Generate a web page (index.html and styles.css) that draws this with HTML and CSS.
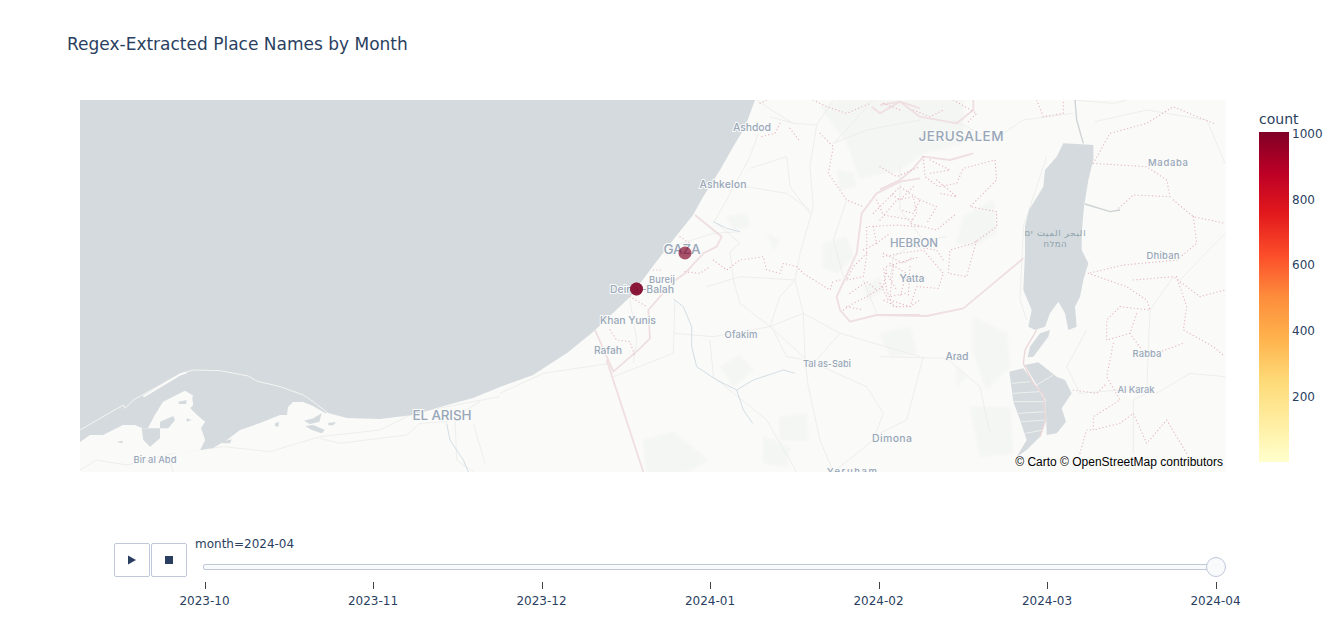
FILE: index.html
```html
<!DOCTYPE html>
<html lang="en">
<head>
<meta charset="utf-8">
<title>Regex-Extracted Place Names by Month</title>
<link rel="stylesheet" href="styles.css">
</head>
<body>
<main class="chart">
  <h1 class="title">Regex-Extracted Place Names by Month</h1>
  <section class="plot-row">
    <div class="map">
      <svg class="map-svg" viewBox="0 0 1146 372" width="1146" height="372" role="img" aria-label="Map of Gaza and surroundings">
        <rect class="land" width="1146" height="372"/>
        <!-- patches -->
        <g class="patches" transform="translate(420,0) scale(.33333)">
          <path d="M430 1020L520 995L625 1080L560 1116H440Z"/>
          <path d="M840 950L920 940L925 1020L840 1020Z"/>
          <path d="M660 800L720 765L760 810L700 860Z"/>
          <path d="M970 430L1040 410L1060 470L1010 520L970 500Z"/>
          <path d="M790 1010L870 1040L860 1100L790 1090Z"/>
          <path d="M1010 210L1060 220L1070 260L1020 270Z"/>
          <path d="M1090 560L1140 530L1150 570L1100 600Z"/>
          <path d="M800 400L840 420L820 450Z"/>
          <path d="M680 350L740 340L750 380L700 390Z"/>
        </g>
        <g class="patches" transform="translate(800,0) scale(.33333)">
          <path d="M-180 20L-120 0H250V130L130 160L60 210L-60 235L-100 130Z"/>
          <path d="M280 650L380 700L390 800L320 870L280 760Z"/>
          <path d="M270 920L390 920L400 1060L300 1070Z"/>
          <path d="M250 350L340 300L350 400L280 440L230 430Z"/>
          <path d="M0 700L90 680L110 760L30 770Z"/>
          <path d="M230 800L260 830L230 860Z"/>
        </g>
        <!-- roads -->
        <g transform="translate(420,0) scale(.33333)" class="roads">
          <polyline points="950,75 930,200 940,320 900,460 885,540 910,640 915,780 925,860 960,1020 1000,1116"/>
          <polyline points="810,50 880,70 950,75 1000,0"/>
          <polyline points="775,100 750,170 680,300 640,370"/>
          <polyline points="750,205 860,170 870,260 930,340"/>
          <polyline points="740,260 860,280 930,330"/>
          <polyline points="650,370 720,430 690,455 700,540 720,610 810,680 900,760 920,780"/>
          <polyline points="810,680 840,590 885,540"/>
          <polyline points="520,700 640,710 810,680 910,640 1020,700"/>
          <polyline points="815,680 860,770 920,780 1100,860 1150,940 1120,1020 1000,1116"/>
          <polyline points="340,830 520,760 525,600"/>
          <polyline points="0,880 130,820 330,790"/>
          <polyline points="630,720 640,830 800,960 890,1116"/>
          <polyline points="1020,700 1260,770"/>
          <polyline points="1020,700 950,780"/>
          <polyline points="885,540 720,530 620,560"/>
          <polyline points="450,460 640,400 720,395"/>
          <polyline points="390,600 410,720 400,790"/>
          <polyline points="1120,0 1020,110 1000,130"/>
          <polyline points="770,0 830,40 880,70"/>
          <polyline points="1000,130 1100,90 1260,60"/>
          <polyline points="1040,300 1000,420 1030,530"/>
          <polyline points="1260,420 1180,470 1170,540"/>
          <polyline points="1090,540 1130,640"/>
        </g>
        <g transform="translate(0,0) scale(.33333)" class="roads">
          <polyline points="0,1110 50,1080 140,1095 280,1060 430,1040 570,1055 720,1010 900,990 1000,940 1100,920 1260,890"/>
          <polyline points="720,1015 780,1030 980,1005 1020,970 1100,965 1200,905"/>
          <polyline points="1180,970 1215,1090"/>
          <polyline points="1125,960 1130,1080 1180,1116"/>
          <polyline points="265,1070 280,1116"/>
        </g>
        <g transform="translate(800,0) scale(.33333)" class="roads">
          <polyline points="0,770 200,775 300,860 330,1000"/>
          <polyline points="645,65 800,30 980,60 1035,190"/>
          <polyline points="500,170 430,380 420,600 440,660"/>
          <polyline points="620,690 560,800 600,880 720,870 830,880 930,820 1035,830"/>
          <polyline points="880,530 810,630 800,880 760,900 760,1060"/>
          <polyline points="900,540 1035,400"/>
          <polyline points="580,0 700,10 740,0"/>
          <polyline points="130,770 80,960 0,1000"/>
          <polyline points="60,200 60,330 130,420 200,410"/>
          <polyline points="220,60 340,120 430,60 580,40"/>
        </g>
        <!-- sea and lagoon -->
        <path class="sea" d="M0 0H675L665 27L653 47L640 70L623 97L613 115L593 140L570 170L550 197L533 213L513 232L487 253L453 275L420 287L393 298L367 305L333 315L300 319L267 318L248 313L245 313L233 306L223 302L213 302L208 307L207 315L200 315L180 323L160 330L147 340L133 348L120 350L125 340L121 328L125 322L117 315L110 308L113 295L112 295L105 291L97 295L83 302L75 315L68 328L62 328L55 325L43 325L33 330L23 335L10 335L0 342Z"/>
        <g transform="scale(.33333)">
          <path class="land" d="M225 945L250 905L290 885L315 872L335 885L340 915L330 925L350 945L375 965L362 985L375 1020L360 1050L300 1060L200 1060L100 1060L120 1000L190 985L205 985Z"/>
          <path class="sea" d="M185 985L240 985L240 1015L210 1040L190 1020Z"/>
          <path class="sea" d="M240 965L280 948L285 960L265 985L240 985Z"/>
          <path class="sea" d="M672 962L700 955L725 940L718 965L690 972Z"/>
          <path class="sea" d="M676 978L700 975L735 990L725 1000L695 990Z"/>
          <path class="sea" d="M745 968L768 967L760 976L745 976Z"/>
          <path class="sea" d="M82 965L95 962L97 985L85 980Z"/>
          <path class="sea" d="M110 1025L130 1022L125 1030Z"/>
          <path class="sea" d="M425 1025L455 1018L450 1030L430 1030Z"/>
          <path class="sea" d="M585 970L597 965L595 980L585 978Z"/>
          <path class="sea" d="M295 905L320 900L318 912L297 912Z"/>
          <path class="sea" d="M320 955L335 960L320 965Z"/>
          <path class="barrier" d="M0 990L130 915L135 925L160 900L300 822L340 810L420 812L505 828L530 843L600 860L670 885L700 905L745 940"/>
          <path class="barrier-thick" d="M190 890L300 824L320 817"/>
        </g>
        <!-- Dead Sea -->
        <g transform="translate(800,0) scale(.33333)">
          <path class="sea" d="M550 130L640 135L640 180L625 240L612 320L605 400L605 450L625 490L610 540L600 590L585 620L590 680L565 690L555 640L535 605L510 640L495 680L465 690L445 680L455 630L430 570L435 460L435 380L447 330L490 260L495 210L530 170Z"/>
          <path class="sea" d="M480 700L510 690L505 710L460 770L443 772L450 740Z"/>
          <path class="sea" d="M388 815L430 805L470 860L497 905L497 960L480 1010L440 1050L410 1070L440 1020L420 960L400 905Z"/>
          <path class="sea" d="M435 795L475 787L530 830L555 840L575 880L545 925L558 965L530 1000L500 1005L497 900L470 855Z"/>
          <g class="pond-lines">
            <polyline points="395,850 450,845"/>
            <polyline points="398,880 480,875"/>
            <polyline points="400,905 495,905"/>
            <polyline points="415,940 497,935"/>
            <polyline points="425,965 497,960"/>
            <polyline points="435,1000 490,990"/>
            <polyline points="470,855 520,825"/>
          </g>
          <polyline class="channel" points="470,690 435,750 430,790 460,850 490,885 497,960 480,1010"/>
          <polyline class="river-grey" points="585,0 590,60 610,130"/>
          <polyline class="river-grey" points="615,312 690,335 720,330"/>
        </g>
        <!-- rivers -->
        <g transform="translate(420,0) scale(.33333)" class="rivers">
          <polyline points="520,597 550,620 575,680 575,740 590,800 650,840 710,870 730,930 758,970"/>
          <polyline points="710,870 760,840 850,810 885,820"/>
          <polyline points="640,365 680,385 720,395"/>
        </g>
        <g transform="scale(.33333)" class="rivers">
          <polyline points="1100,970 1110,1020 1150,1080 1165,1116"/>
        </g>
        <!-- solid borders -->
        <g transform="translate(420,0) scale(.33333)" class="borders">
          <polyline points="585,345 665,410 650,440 610,460 555,520 520,545 445,630 450,715 420,745 340,815 285,690"/>
          <polyline points="320,780 430,1116"/>
          <polyline points="1260,645 1130,645 1050,665 1020,630 1010,590 1070,460 1085,340 1130,280 1200,245 1260,235"/>
          <polyline points="1115,20 1140,40 1200,5 1260,25"/>
        </g>
        <g transform="translate(800,0) scale(.33333)" class="borders">
          <polyline points="0,645 140,648 250,625 340,550 430,475"/>
          <polyline points="0,268 60,240 100,205 130,170 210,180 280,160"/>
          <polyline points="0,15 60,5 120,50 230,70 280,30 280,0"/>
        </g>
        <!-- dotted admin lines -->
        <g transform="translate(420,0) scale(.33333)" class="dots">
          <polyline points="780,10 800,0"/>
          <polyline points="840,70 825,100 785,110"/>
          <polyline points="870,85 900,125"/>
          <polyline points="960,100 1000,140 985,220 1040,300 1090,320"/>
          <polyline points="640,480 680,510 720,480 790,470 800,510 840,520 850,490 890,500 910,520 990,570 1000,540"/>
          <polyline points="555,515 600,520 630,500"/>
          <polyline points="540,410 570,430"/>
          <polyline points="460,510 490,510"/>
          <polyline points="390,590 440,620"/>
          <polyline points="330,690 350,720 390,725 405,770"/>
          <polyline points="1030,630 1060,610 1100,590 1150,560 1160,500 1260,470"/>
          <polyline points="1040,540 1090,530 1100,470 1100,380 1190,375 1260,380"/>
          <polyline points="1120,340 1200,260 1260,300 1240,340 1200,330"/>
          <polyline points="1170,600 1230,620 1260,600"/>
          <polyline points="1220,540 1260,545"/>
          <polyline points="1100,460 1060,500 1040,540"/>
          <polyline points="1130,430 1170,400"/>
          <polyline points="1160,520 1190,570"/>
          <polyline points="940,0 980,20 1040,40 1110,10"/>
          <polyline points="1150,10 1200,30"/>
          <polyline points="1190,620 1150,600"/>
          <polyline points="1120,380 1130,430 1090,450"/>
          <polyline points="1150,460 1210,490 1240,470"/>
          <polyline points="1180,500 1170,590 1215,580"/>
          <polyline points="1230,500 1225,590"/>
          <polyline points="1050,580 1100,545 1130,570"/>
          <polyline points="1130,300 1150,345 1240,360"/>
          <polyline points="1040,620 1090,630"/>
          <polyline points="1020,540 1000,545"/>
        </g>
        <g transform="translate(800,0) scale(.33333)" class="dots">
          <polyline points="130,170 135,230 175,260 230,250 250,205 345,180 350,240 270,320 350,335 350,380 280,430 210,450 205,520 260,530 290,420"/>
          <polyline points="0,360 50,300 100,290 110,340 90,370 170,390 230,340"/>
          <polyline points="10,470 60,460 130,450 190,520 175,565 110,560 90,620 40,620 20,570 10,500"/>
          <polyline points="100,440 170,450 190,480"/>
          <polyline points="100,30 150,50 190,30"/>
          <polyline points="220,0 290,40 260,70"/>
          <polyline points="170,240 230,290 180,280"/>
          <polyline points="0,550 25,600"/>
          <polyline points="150,180 210,210 150,220"/>
          <polyline points="0,200 50,230 120,200"/>
          <polyline points="100,260 60,300 30,280"/>
          <polyline points="120,300 170,320 140,370"/>
          <polyline points="30,490 80,520 60,590"/>
          <polyline points="470,0 490,50 550,40 550,0"/>
          <polyline points="640,190 690,100 800,70 880,20 1000,70"/>
          <polyline points="640,190 800,200 860,240 870,290 760,285 710,330"/>
          <polyline points="880,300 940,350 1035,370"/>
          <polyline points="940,350 950,430 890,480 730,495 625,520"/>
          <polyline points="625,520 740,560 800,600 810,630 720,620 680,660 680,720 750,700 770,640"/>
          <polyline points="760,540 880,530 960,590 1035,570"/>
          <polyline points="890,530 920,620 910,690 1000,740 1035,770"/>
          <polyline points="750,700 800,770 910,730"/>
          <polyline points="700,730 680,830 720,900 640,950 640,990 720,970 760,940 800,1030 860,960 920,1060"/>
          <polyline points="580,870 650,880 680,850"/>
          <polyline points="600,1060 620,990 640,990"/>
        </g>
        <!-- labels -->
        <g class="labels">
          <text x="672" y="31" textLength="38">Ashdod</text>
          <text x="643" y="88" textLength="47">Ashkelon</text>
          <text class="big" x="602" y="154" textLength="37">GAZA</text>
          <text class="small" x="582" y="183" textLength="26">Bureij</text>
          <text x="562" y="193" textLength="64">Deir al-Balah</text>
          <text x="548" y="224" textLength="56">Khan Yunis</text>
          <text x="528" y="254" textLength="28">Rafah</text>
          <text class="small" x="661" y="238" textLength="33">Ofakim</text>
          <text class="small" x="747" y="267" textLength="48">Tal as-Sabi</text>
          <text x="812" y="342" textLength="40">Dimona</text>
          <text class="mid" x="834" y="147" textLength="48">HEBRON</text>
          <text x="832" y="182" textLength="25">Yatta</text>
          <text class="big" x="881" y="41" textLength="85">JERUSALEM</text>
          <text class="small" x="1088" y="66" textLength="40">Madaba</text>
          <text class="small" x="1083" y="159" textLength="33">Dhiban</text>
          <text x="877" y="260" textLength="23">Arad</text>
          <text class="small" x="1067" y="257" textLength="29">Rabba</text>
          <text class="small" x="1056" y="293" textLength="37">Al Karak</text>
          <text class="big" x="362" y="320" textLength="59">EL ARISH</text>
          <text class="small" x="75" y="363" textLength="43">Bir al Abd</text>
          <text class="small" x="772" y="375" textLength="50">Yeruham</text>
          <text class="water" x="975" y="136" textLength="61">البحر الميت ים</text>
          <text class="water" x="975" y="147" textLength="23">המלח</text>
        </g>
        <!-- markers -->
        <circle class="marker" cx="605" cy="153" r="6.5"/>
        <circle class="marker" cx="556.5" cy="189" r="6.5"/>
        <circle class="marker" cx="556.5" cy="189" r="6.5"/>
      </svg>
      <span class="attribution">© Carto © OpenStreetMap contributors</span>
    </div>
    <aside class="colorbar">
      <div class="colorbar-title">count</div>
      <div class="colorbar-body">
        <div class="colorbar-ramp"></div>
        <ul class="colorbar-ticks">
          <li>1000</li>
          <li>800</li>
          <li>600</li>
          <li>400</li>
          <li>200</li>
        </ul>
      </div>
    </aside>
  </section>
  <section class="player">
    <div class="buttons">
      <button class="btn" type="button" aria-label="Play"><svg width="10" height="10" viewBox="0 0 10 10"><path class="glyph" d="M1 0.5L9 5L1 9.5Z"/></svg></button>
      <button class="btn" type="button" aria-label="Stop"><svg width="8" height="8" viewBox="0 0 8 8"><rect class="glyph" width="8" height="8"/></svg></button>
    </div>
    <div class="slider">
      <div class="slider-label">month=2024-04</div>
      <div class="rail"><span class="handle"></span></div>
      <ul class="steps">
        <li>2023-10</li>
        <li>2023-11</li>
        <li>2023-12</li>
        <li>2024-01</li>
        <li>2024-02</li>
        <li>2024-03</li>
        <li>2024-04</li>
      </ul>
    </div>
  </section>
</main>
</body>
</html>
```
FILE: styles.css
```css
* { box-sizing: border-box; }
html, body { margin: 0; padding: 0; background: #fff; }
body { font-family: "DejaVu Sans", Verdana, sans-serif; color: #2a3f5f; overflow: hidden; }
ul { list-style: none; margin: 0; padding: 0; }

.chart { width: 1342px; height: 626px; display: flex; flex-direction: column; }
.title { margin: 0; padding: 34px 0 0 67px; height: 100px; font-size: 17px; line-height: 20px; font-weight: 400; color: #2a3f5f; }

.plot-row { display: flex; height: 372px; padding-left: 80px; }
.map { position: relative; width: 1146px; height: 372px; overflow: hidden; flex: none; }
.map-svg { display: block; }
.land { fill: #fafaf8; }
.sea { fill: #d4dadd; }
.patches { filter: blur(2.5px); }
.patches path { fill: #f4f6f3; }
.barrier { fill: none; stroke: #fafaf8; stroke-width: 2.5; }
.barrier-thick { fill: none; stroke: #fafaf8; stroke-width: 6; }
.roads polyline { fill: none; stroke: #ebecea; stroke-width: 2.6; stroke-linejoin: round; }
.rivers polyline { fill: none; stroke: #cfdbe3; stroke-width: 2.8; stroke-linejoin: round; }
.borders polyline { fill: none; stroke: #efdfe0; stroke-width: 5.5; stroke-linejoin: round; }
.dots polyline { fill: none; stroke: #e4b6bf; stroke-width: 3.6; stroke-dasharray: 0.5 10; stroke-linecap: round; stroke-linejoin: round; }
.pond-lines polyline { fill: none; stroke: #fafaf8; stroke-width: 2; }
.channel { fill: none; stroke: #ecd6d8; stroke-width: 4; }
.river-grey { fill: none; stroke: #cdd2d5; stroke-width: 4; }

.labels text { font-family: Inter, "Noto Sans", sans-serif; font-size: 10.5px; font-weight: 500; fill: #98a7b9; stroke: #fafaf8; stroke-width: 2px; paint-order: stroke; text-anchor: middle; }
.labels .small { font-size: 9.5px; }
.labels .mid { font-size: 11.5px; }
.labels .big { font-size: 13.5px; }
.labels .water { font-family: "DejaVu Sans", sans-serif; font-size: 8.5px; fill: #8ba0ab; stroke: none; }

.marker { fill: #800026; fill-opacity: .68; }

.attribution { position: absolute; right: 3px; bottom: 3px; font-family: "Liberation Sans", Arial, sans-serif; font-size: 12px; line-height: 14px; color: #000; text-shadow: 0 0 2px #fff, 0 0 2px #fff; white-space: nowrap; }

.colorbar { margin-left: 33px; width: 70px; padding-top: 9px; }
.colorbar-title { font-size: 14px; line-height: 20px; height: 23px; }
.colorbar-body { display: flex; }
.colorbar-ramp { width: 30px; height: 330px; background: linear-gradient(to bottom, #800026, #bd0026, #e31a1c, #fc4e2a, #fd8d3c, #feb24c, #fed976, #ffeda0, #ffffcc); }
.colorbar-ticks { margin-left: 3px; margin-top: -5px; font-size: 12px; }
.colorbar-ticks li { height: 65.7px; line-height: 14px; }

.player { display: flex; padding: 71px 0 0 114px; }
.buttons { display: flex; gap: 1px; }
.btn { width: 36px; height: 34px; padding: 0; display: flex; align-items: center; justify-content: center; background: #fff; border: 1px solid #bec8d9; border-radius: 2px; }
.glyph { fill: #2a3f5f; }

.slider { margin-left: 8px; width: 1060px; display: flex; flex-direction: column; margin-top: -7px; }
.slider-label { font-size: 12px; line-height: 16px; height: 28px; }
.rail { position: relative; margin-left: 8px; width: 1013px; height: 6px; background: #f8fafc; border: 1px solid #bec8d9; border-radius: 2px; }
.handle { position: absolute; right: -11px; top: -8px; width: 20px; height: 20px; border-radius: 50%; background: #f8fafc; border: 1px solid #bec8d9; }
.steps { display: flex; justify-content: space-between; width: 1081px; margin: 12px 0 0 -25.5px; font-size: 12px; line-height: 14px; }
.steps li { width: 70px; text-align: center; padding-top: 12px; position: relative; }
.steps li::before { content: ""; position: absolute; left: 50%; top: 0; height: 7px; border-left: 1px solid #444; }
```
